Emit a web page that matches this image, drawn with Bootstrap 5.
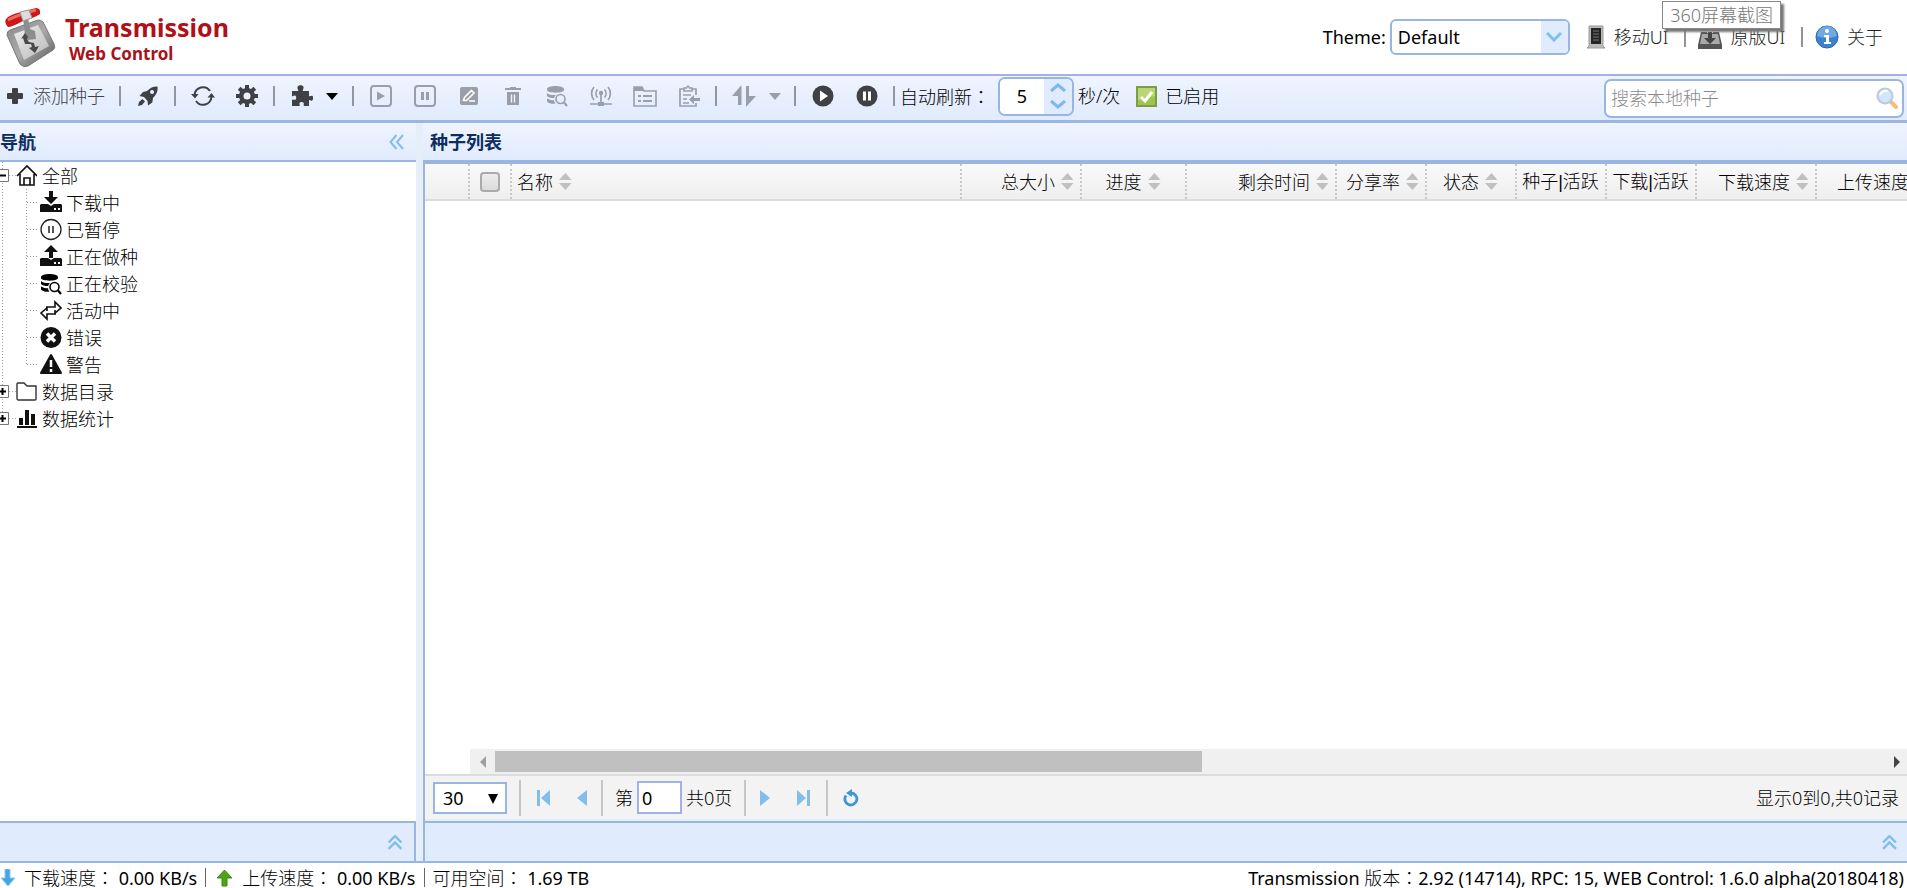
<!DOCTYPE html>
<html lang="zh-CN">
<head>
<meta charset="utf-8">
<meta name="viewport" content="width=device-width, initial-scale=1">
<title>Transmission Web Control</title>
<link href="https://cdn.jsdelivr.net/npm/bootstrap@5.3.0/dist/css/bootstrap.min.css" rel="stylesheet">
<style>
:root{--line:#99b6e2;--pane:#e0ebfd;--gutter:#e6eef8;--sky:#83bdea}
body{font-family:"Noto Sans","Noto Sans CJK SC",sans-serif;font-size:18px;font-weight:300;line-height:24px;color:#000;background:#fff}
svg{display:block;flex:none}
button{border:0;background:none;padding:0;color:inherit;font-weight:inherit}
a{color:#222;text-decoration:none}
.colon{font-family:"Noto Sans CJK TC",sans-serif}
.pipe{font-family:"Liberation Sans",sans-serif}
.masthead{height:74px}
.brand-name{font-size:25px;line-height:30px;font-weight:700;color:#b01016}
.brand-sub{font-size:17px;line-height:24px;font-weight:700;color:#a81218;padding-left:4px}
.theme-box{width:180px;height:36px;border:2px solid var(--line);border-radius:6px;overflow:hidden;background:#fff}
.theme-box select{appearance:none;border:0;background:transparent;padding:0 6px;outline:0;min-width:0}
.arrow-cell{width:27px;background:var(--pane)}
.vbar{width:2px;height:20px;background:#8f939b}
.tip{top:1px;right:126px;border:1px solid #888;background:#fff;color:#777;padding:0 7px;line-height:26px;box-shadow:3px 3px 2px #777}
.toolbar{border-top:2px solid #a3b2e6;border-bottom:3px solid var(--line);height:49px;background:linear-gradient(#eff4ff,#e0ebfd)}
.tool-set{padding-bottom:4px}
.tool{width:44px;height:32px;color:#404145;display:flex;align-items:center;justify-content:center}
.tool:disabled{color:#9a9ea8}
.tool.split{width:68px;gap:13px}
.tool.add{width:115px;justify-content:flex-start;padding-left:7px;gap:10px;white-space:nowrap}
.sep{width:2px;height:20px;background:#92969e;margin:0 5px 0 4px;flex:none}
.spin{width:76px;height:39px;border:2px solid var(--line);border-radius:7px;overflow:hidden;background:#fff}
.spin input{appearance:textfield;border:0;text-align:center;width:44px;padding:0;outline:0}
.spin input::-webkit-inner-spin-button{display:none}
.steps{background:var(--pane)}
.tick{appearance:none;width:21px;height:21px;margin:0;border:2px solid #7e9c45;background:#9fc54a url("data:image/svg+xml,%3Csvg xmlns='http://www.w3.org/2000/svg' viewBox='0 0 17 17'%3E%3Cpath d='M0 0h17v8L0 12z' fill='%23b9d675'/%3E%3Cpath d='M3 9l4 4 7-9' fill='none' stroke='%23fff' stroke-width='3'/%3E%3C/svg%3E") center/cover}
.search{width:300px;height:39px;border:2px solid var(--line);border-radius:7px;background:#fff;margin-right:3px}
.search input{border:0;outline:0;background:transparent;padding:0 0 0 5px;min-width:0;font-weight:300}
.search input::placeholder{color:#8b8b8b;opacity:1}
.nav-pane{width:416px}
.pane-head{height:39px;background:linear-gradient(#eff4ff,#e0ebfd);color:#0e2d5f;font-weight:700;border-bottom:2px solid var(--line)}
.list-pane .pane-head{height:41px;border-bottom-width:4px;padding-left:7px}
.gutter{width:7px;background:var(--gutter)}
.tree li{height:27px}
.root-row{gap:5px}
.leaf-row{gap:4px}
.fold{height:42px;background:var(--pane);border-top:2px solid var(--line);border-bottom:2px solid var(--line)}
.nav-pane .fold{border-right:2px solid var(--line);padding-right:10px}
.list-body{border-left:2px solid var(--line)}
.list-body .fold{padding-right:10px}
.grid-head{background:linear-gradient(#f9f9f9,#efefef);border-bottom:2px solid #dcdcdc}
.grid-head table{table-layout:fixed;width:1511px;border-collapse:separate;border-spacing:0}
.grid-head th{height:35px;font-weight:inherit;border-right:2px dotted #c8c8c8;padding:0 6px 0 5px;white-space:nowrap}
.grid-head th>div{display:flex;align-items:center;gap:6px}
.pick{appearance:none;width:20px;height:20px;margin:0;display:block;border:2px solid #aaa;border-radius:4px;background:linear-gradient(#ededed,#dcdcdc)}
.hscroll{height:25px;margin-left:45px;background:#f0f0f0}
.hscroll button{width:25px}
.thumb{background:#c0c0c0;height:21px}
.pager{height:45px;border-top:2px solid #dcdcdc;background:#f3f3f3}
.rule{width:2px;height:36px;background:#c6c6c6}
.pager select{appearance:none;width:74px;height:32px;border:2px solid var(--line);background:#fff;padding:0 8px;border-radius:0}
.page-size svg{right:9px;top:12px;pointer-events:none}
.pager input{width:45px;height:33px;border:2px solid #a3b2e6;padding:0 3px;background:#fff}
.pg{width:38px;display:flex;justify-content:center;color:var(--sky)}
.under-pager{height:2px;background:var(--gutter)}
.status{height:25px;padding:4px 3px 0 0;line-height:21px;white-space:nowrap}
.status .sbar{width:1px;height:19px;background:#666}
.latin{font-weight:400}
</style>
</head>
<body class="vh-100 d-flex flex-column overflow-hidden">
<svg width="0" height="0" class="position-absolute" aria-hidden="true">
<symbol id="sort" viewBox="0 0 13 17"><path d="M6.500 0l6 7H0zM6.500 17l6-7H0z" fill="#c0c0c0"/></symbol>
<symbol id="dbfind" viewBox="0 0 22 22" fill="currentColor"><path d="M1 4c0-4 17-4 17 0v1c0 3.500-17 3.500-17 0zM1 8c2 2 6 2.300 9 2-1 .8-1.500 2-1.800 3C5 13 2 12.400 1 11zM1 13.500c2 1.300 5 1.800 7 1.800.2 1.400.7 2.600 1.400 3.500C6 19 2 18.500 1 16.500z"/><g fill="none" stroke="currentColor" stroke-width="1.600"><circle cx="14.500" cy="14" r="4.500"/><path d="M18 17.500l3 3.500" stroke-width="2.200"/></g></symbol>
<symbol id="chev" viewBox="0 0 14 14"><path d="M1 7l6-6 6 6M1 13l6-6 6 6" fill="none" stroke="#83bdea" stroke-width="2.200"/></symbol>
<symbol id="disk" viewBox="0 0 22 9"><path d="M1 1h7l3 2 3-2h7l1 1v7H0V2z" fill="#111"/><path d="M14 5h2v2h-2zM18 5h2v2h-2z" fill="#fff"/></symbol>
</svg>

<header class="masthead d-flex justify-content-between position-relative flex-shrink-0">
  <div class="d-flex align-items-start">
    <svg width="61" height="72" viewBox="0 0 61 72" aria-hidden="true">
      <defs><linearGradient id="metal" x2="1" y2="1"><stop stop-color="#888"/><stop offset=".5" stop-color="#aaa"/><stop offset="1" stop-color="#555"/></linearGradient>
      <linearGradient id="plate" x2="1" y2="1"><stop stop-color="#eee"/><stop offset="1" stop-color="#b8b8b8"/></linearGradient></defs>
      <path d="M10 30l28-10q3 0 5 2l11 22q2 4-1 6L28 66q-5 2-8-2L7 35q0-4 3-5z" fill="url(#metal)" stroke="#777"/>
      <path d="M14 34l24-9 11 21-25 14z" fill="url(#plate)"/>
      <path d="M23 18l5-1 2 12 5 2 1 8-8 1-3-5z" fill="#8d8d8d"/>
      <path d="M21 39l4-6 3 4-1 2 2 3 5 1 1 4 4-1-4 7-6-5 3-1-1-3-6 0-2-6z" fill="#4a4a4a"/>
      <path d="M6 19Q9 15 21 12L36 8q5 0 4 6-6 4-17 7Q12 27 8 27q-4-4-2-8z" fill="#cf1719"/>
      <path d="M8 20Q20 14 36 10" stroke="#f06a60" stroke-width="3" fill="none"/>
      <path d="M20 12l9-2 3 8-9 3z" fill="#ddd" stroke="#999"/>
    </svg>
    <div class="pt-2 mt-1 ps-1"><div class="brand-name">Transmission</div><div class="brand-sub">Web Control</div></div>
  </div>
  <div class="d-flex align-items-center gap-2 pe-4">
    <div class="d-flex align-items-center gap-1"><label for="theme" class="latin">Theme:</label>
    <div class="theme-box d-flex"><select id="theme" class="flex-fill latin"><option>Default</option></select>
      <span class="arrow-cell d-flex align-items-center justify-content-center"><svg width="16" height="10" viewBox="0 0 16 10"><path d="M1 1l7 7 7-7" fill="none" stroke="#7cc0f0" stroke-width="3"/></svg></span></div></div>
    <a href="#" class="d-flex align-items-center gap-2 ms-2"><svg width="20" height="24" viewBox="0 0 20 24"><path d="M3 1h14v20l2 2H1l2-2z" fill="#bbb" stroke="#999"/><path d="M5 3h10v16H5z" fill="#252525"/><path d="M7 6h6M7 9h6M7 12h6M7 15h6" stroke="#777"/></svg>移动UI</a>
    <span class="vbar ms-2 me-1"></span>
    <a href="#" class="d-flex align-items-center gap-2"><svg width="24" height="24" viewBox="0 0 24 24"><path d="M3 7h18l3 13v4H0v-4z" fill="#555"/><path d="M4 9h16l2 10H2z" fill="#aaa"/><path d="M2 2h20v4H2z" fill="#d33"/><path d="M9 1h6v7H9z" fill="#eee"/><path d="M10 7h4v6h4l-6 6-6-6h4z" fill="#444"/></svg>原版UI</a>
    <span class="vbar ms-2 me-1"></span>
    <a href="#" class="d-flex align-items-center gap-2"><svg width="24" height="24" viewBox="0 0 24 24"><circle cx="12" cy="12" r="11" fill="#3c82cb" stroke="#2a67ad"/><path d="M2 11a10 10 0 0 1 20 0q-10 4-20 0z" fill="#71aae3"/><circle cx="12" cy="6" r="2" fill="#fff"/><path d="M9 10h5v7h2v2H9v-2h2v-5H9z" fill="#fff"/></svg>关于</a>
  </div>
  <div class="tip position-absolute" role="tooltip">360屏幕截图</div>
</header>

<div class="toolbar d-flex align-items-center justify-content-between flex-shrink-0" role="toolbar">
  <div class="tool-set d-flex align-items-center">
    <button class="tool add"><svg width="16" height="16" viewBox="0 0 16 16"><path d="M5 1q0-1 1-1h4q1 0 1 1v4h4q1 0 1 1v4q0 1-1 1h-4v4q0 1-1 1H6q-1 0-1-1v-4H1q-1 0-1-1V6q0-1 1-1h4z" fill="currentColor"/></svg>添加种子</button>
    <span class="sep"></span>
    <button class="tool" aria-label="启动"><svg width="20" height="20" viewBox="0 0 20 20"><path fill-rule="evenodd" d="M19.500.5c.5 4-.5 7.500-4.500 11.500l-.7 4.500L10 19.500 9.500 15 6 11 1.500 10 5 6l4-1C12.500 1.500 15.500.3 19.500.5zM14 4a2 2 0 1 0 .1 4A2 2 0 0 0 14 4z" fill="currentColor"/><path d="M4.500 13L7 15.500 4 19 0 20l1-4z" fill="currentColor"/></svg></button>
    <span class="sep"></span>
    <button class="tool" aria-label="刷新"><svg width="24" height="20" viewBox="0 0 24 20"><g fill="none" stroke="currentColor" stroke-width="2"><path d="M3.500 9a8.500 8.500 0 0 1 15.500-4M20.500 11A8.500 8.500 0 0 1 5 15"/></g><path d="M0 8h7.500L4 12.500zM16.500 11.500H24L20.500 7z" fill="currentColor"/></svg></button>
    <button class="tool" aria-label="设置"><svg width="22" height="22" viewBox="0 0 22 22"><g fill="currentColor"><path d="M9 0h4v22H9z"/><path d="M9 0h4v22H9z" transform="rotate(45 11 11)"/><path d="M9 0h4v22H9z" transform="rotate(90 11 11)"/><path d="M9 0h4v22H9z" transform="rotate(135 11 11)"/><circle cx="11" cy="11" r="8"/></g><circle cx="11" cy="11" r="3.500" fill="#eaf1fe"/></svg></button>
    <span class="sep"></span>
    <button class="tool split" aria-label="插件"><svg width="22" height="22" viewBox="0 0 22 22"><path d="M1 6h6c1-1-1-2-.5-4C7-.5 12-.5 12.500 2c.5 2-1.500 3-.5 4h6v5c1 1 2-.8 3.300-.2 1.500 1 .9 4.700-1 4.900-1.300 0-1.800-1.200-2.300-.2V21h-5c-1-1 .5-2-.5-3.200-1-1-3.500-1-4 .5-.4 1.200.8 1.700 0 2.700H1v-6c1-1 2 .3 3.300-.3 1.400-1 1.200-3.800-.5-4.200C2.500 10.300 2 11.800 1 11z" fill="currentColor"/></svg><svg width="12" height="7" viewBox="0 0 12 7"><path d="M0 0h12L6 7z" fill="#000"/></svg></button>
    <span class="sep"></span>
    <button class="tool" disabled aria-label="开始"><svg width="22" height="22" viewBox="0 0 22 22"><rect x="1" y="1" width="20" height="20" rx="3" fill="none" stroke="currentColor" stroke-width="2"/><path d="M7 6.500l8 4.500-8 4.500z" fill="currentColor"/></svg></button>
    <button class="tool" disabled aria-label="暂停"><svg width="22" height="22" viewBox="0 0 22 22"><rect x="1" y="1" width="20" height="20" rx="3" fill="none" stroke="currentColor" stroke-width="2"/><path d="M7 7h3v8H7zM12 7h3v8h-3z" fill="currentColor"/></svg></button>
    <button class="tool" disabled aria-label="编辑"><svg width="18" height="18" viewBox="0 0 18 18"><rect width="18" height="18" rx="2" fill="currentColor"/><path d="M3.500 13.500l1-3 7-7 2.500 2.500-7.500 7.500zM9 14h6" fill="none" stroke="#fff" stroke-width="1.600"/></svg></button>
    <button class="tool" disabled aria-label="删除"><svg width="16" height="18" viewBox="0 0 16 18"><path d="M5 0h6v1h5v2H0V1h5z" fill="currentColor"/><path d="M2 5h12v13H2z" fill="currentColor"/><path d="M6.500 7.500v8M9.500 7.500v8" stroke="#eef3fe" stroke-width="1.400"/></svg></button>
    <button class="tool" disabled aria-label="校验"><svg width="22" height="22"><use href="#dbfind"/></svg></button>
    <button class="tool" disabled aria-label="汇报"><svg width="22" height="20" viewBox="0 0 22 20"><g fill="none" stroke="currentColor" stroke-width="1.700"><path d="M4 1a10 10 0 0 0 0 13M18 1a10 10 0 0 1 0 13M7.500 3.500a6 6 0 0 0 0 8M14.500 3.500a6 6 0 0 1 0 8M11 8v8M0 18h22"/></g><circle cx="11" cy="7" r="2.200" fill="currentColor"/><path d="M8 16h6v4H8z" fill="currentColor"/></svg></button>
    <button class="tool" disabled aria-label="目录"><svg width="24" height="21" viewBox="0 0 24 21"><path d="M1 20V1h8l2 4h12v15z" fill="none" stroke="currentColor" stroke-width="1.600"/><path d="M1 1h8l2 4H1z" fill="currentColor"/><path d="M5 10h3M5 15h3M10 10h9M10 15h9" stroke="currentColor" stroke-width="2"/></svg></button>
    <button class="tool" disabled aria-label="标签"><svg width="21" height="22" viewBox="0 0 21 22"><path d="M17 10V4h-4M5 4H1v17h16v-3M5 6V3h2.500q1.500-4 3 0H13v3z" fill="none" stroke="currentColor" stroke-width="1.700"/><path d="M4 10h8M4 14h4M4 18h6" stroke="currentColor" stroke-width="1.600"/><path d="M21 13v3h-6v3l-5-4.500L15 10v3z" fill="currentColor"/></svg></button>
    <span class="sep"></span>
    <button class="tool split" disabled aria-label="队列"><svg width="24" height="22" viewBox="0 0 24 22"><path d="M9.500 0v20H6V11H0zM14 1h3v10h7l-10 11z" fill="currentColor"/></svg><svg width="12" height="7" viewBox="0 0 12 7"><path d="M0 0h12L6 7z" fill="currentColor"/></svg></button>
    <span class="sep"></span>
    <button class="tool" aria-label="全部开始"><svg width="22" height="22" viewBox="0 0 22 22"><circle cx="11" cy="11" r="10.500" fill="currentColor"/><path d="M8 5.500l8 5.500-8 5.500z" fill="#fff"/></svg></button>
    <button class="tool" aria-label="全部暂停"><svg width="22" height="22" viewBox="0 0 22 22"><circle cx="11" cy="11" r="10.500" fill="currentColor"/><path d="M7 6.500h3v9H7zM12 6.500h3v9h-3z" fill="#fff"/></svg></button>
    <span class="sep"></span>
    <label for="interval" class="pe-2">自动刷新<span class="colon" lang="zh-TW">：</span></label>
    <div class="spin d-flex"><input id="interval" type="number" value="5" class="latin">
      <span class="steps flex-fill d-flex flex-column justify-content-around align-items-center"><button aria-label="增加"><svg width="16" height="9" viewBox="0 0 16 9"><path d="M1 8l7-6 7 6" fill="none" stroke="#7cb9ea" stroke-width="3"/></svg></button><button aria-label="减少"><svg width="16" height="9" viewBox="0 0 16 9"><path d="M1 1l7 6 7-6" fill="none" stroke="#7cb9ea" stroke-width="3"/></svg></button></span></div>
    <span class="ps-1">秒/次</span>
    <label class="d-flex align-items-center gap-2 ps-3"><input type="checkbox" class="tick" checked> 已启用</label>
  </div>
  <div class="search d-flex align-items-center"><input type="text" class="flex-fill" placeholder="搜索本地种子" aria-label="搜索本地种子">
    <button aria-label="搜索" class="pe-1"><svg width="22" height="22" viewBox="0 0 22 22"><path d="M14 14l6 6" stroke="#f0bf80" stroke-width="4" stroke-linecap="round"/><circle cx="9" cy="9" r="7.500" fill="#cfe6fb" stroke="#bcc9da" stroke-width="2"/><path d="M4 8q2-5 8-4" stroke="#fff" stroke-width="2" fill="none"/></svg></button></div>
</div>

<main class="flex-fill d-flex overflow-hidden">
  <aside class="nav-pane d-flex flex-column flex-shrink-0">
    <div class="pane-head d-flex align-items-center justify-content-between"><span>导航</span><button aria-label="折叠" class="me-2 pe-1"><svg width="15" height="16" viewBox="0 0 15 16"><path d="M7.500 1L1.500 8l6 7M14 1L8 8l6 7" fill="none" stroke="#83bdea" stroke-width="2"/></svg></button></div>
    <ul class="tree list-unstyled flex-fill mb-0">
      <li class="root-row d-flex align-items-center">
        <svg width="37" height="27" viewBox="0 0 37 27"><path d="M2.500 0v27M9 13.500h7" stroke="#aaa" stroke-dasharray="1 2"/><path d="M-4.500 7.500h13v12h-13z" fill="#fff" stroke="#777"/><path d="M0 13.500h6" stroke="#000" stroke-width="2"/><path d="M17 14L27 4l10 10M20 12v11h14V12M24 23v-7h6v7" fill="none" stroke="#111" stroke-width="1.600"/></svg>全部</li>
      <li class="leaf-row d-flex align-items-center"><svg width="62" height="27" viewBox="0 0 62 27"><path d="M2.500 0v27M26.500 0v27M27 13.500h12" stroke="#999" stroke-dasharray="1 2"/><path d="M49 2h4v6h5l-7 7-7-7h5z" fill="#111"/><use href="#disk" x="40" y="14" width="22" height="9"/></svg>下载中</li>
      <li class="leaf-row d-flex align-items-center"><svg width="62" height="27" viewBox="0 0 62 27"><path d="M2.500 0v27M26.500 0v27M27 13.500h12" stroke="#999" stroke-dasharray="1 2"/><circle cx="51" cy="13.500" r="10" fill="none" stroke="#222" stroke-width="1.300"/><path d="M49 10v7M53 10v7" stroke="#222" stroke-width="1.500"/></svg>已暂停</li>
      <li class="leaf-row d-flex align-items-center"><svg width="62" height="27" viewBox="0 0 62 27"><path d="M2.500 0v27M26.500 0v27M27 13.500h12" stroke="#999" stroke-dasharray="1 2"/><path d="M49 15h4V9h5l-7-7-7 7h5z" fill="#111"/><use href="#disk" x="40" y="14" width="22" height="9"/></svg>正在做种</li>
      <li class="leaf-row d-flex align-items-center"><svg width="62" height="27" viewBox="0 0 62 27"><path d="M2.500 0v27M26.500 0v27M27 13.500h12" stroke="#999" stroke-dasharray="1 2"/><use href="#dbfind" x="40" y="3" width="22" height="22"/></svg>正在校验</li>
      <li class="leaf-row d-flex align-items-center"><svg width="62" height="27" viewBox="0 0 62 27"><path d="M2.500 0v27M26.500 0v27M27 13.500h12" stroke="#999" stroke-dasharray="1 2"/><path d="M46 10h9V5l6 6-6 5v-3M56 17h-9v5l-6-6 6-5v3" fill="none" stroke="#111" stroke-width="1.600"/></svg>活动中</li>
      <li class="leaf-row d-flex align-items-center"><svg width="62" height="27" viewBox="0 0 62 27"><path d="M2.500 0v27M26.500 0v27M27 13.500h12" stroke="#999" stroke-dasharray="1 2"/><circle cx="51" cy="13.500" r="10.500" fill="#111"/><path d="M47 9.500l8 8M55 9.500l-8 8" stroke="#fff" stroke-width="3.500"/></svg>错误</li>
      <li class="leaf-row d-flex align-items-center"><svg width="62" height="27" viewBox="0 0 62 27"><path d="M2.500 0v27M26.500 0v13M27 13.500h12" stroke="#999" stroke-dasharray="1 2"/><path d="M51 4l10 18H41z" fill="#111" stroke="#111" stroke-width="2" stroke-linejoin="round"/><path d="M51 9v7M51 18v3" stroke="#fff" stroke-width="2.500"/></svg>警告</li>
      <li class="root-row d-flex align-items-center">
        <svg width="37" height="27" viewBox="0 0 37 27"><path d="M2.500 0v27M9 13.500h7" stroke="#aaa" stroke-dasharray="1 2"/><path d="M-4.500 7.500h13v12h-13z" fill="#fff" stroke="#777"/><path d="M0 13.500h6M2.500 10v7" stroke="#000" stroke-width="2"/><path d="M17 20V6q0-1 1-1h6l3 3h9v13q0 1-1 1H18q-1 0-1-2" fill="none" stroke="#333" stroke-width="1.400"/></svg>数据目录</li>
      <li class="root-row d-flex align-items-center">
        <svg width="37" height="27" viewBox="0 0 37 27"><path d="M2.500 0v13M9 13.500h7" stroke="#aaa" stroke-dasharray="1 2"/><path d="M-4.500 7.500h13v12h-13z" fill="#fff" stroke="#777"/><path d="M0 13.500h6M2.500 10v7" stroke="#000" stroke-width="2"/><path d="M17 21h20v2H17zM19 13h4v7h-4zM25 5h4v15h-4zM31 9h4v11h-4z" fill="#111"/></svg>数据统计</li>
    </ul>
    <div class="fold d-flex align-items-center justify-content-end"><button aria-label="展开"><svg width="18" height="15"><use href="#chev"/></svg></button></div>
  </aside>
  <div class="d-flex flex-column"><div class="gutter flex-fill"></div><div class="border-bottom border-2" style="--bs-border-color:#99b6e2"></div></div>
  <section class="list-pane flex-fill d-flex flex-column overflow-hidden">
    <div class="pane-head d-flex align-items-center flex-shrink-0">种子列表</div>
    <div class="list-body flex-fill d-flex flex-column overflow-hidden">
      <div class="grid-head overflow-hidden flex-shrink-0">
        <table>
          <colgroup><col style="width:45px"><col style="width:42px"><col style="width:450px"><col style="width:120px"><col style="width:105px"><col style="width:150px"><col style="width:90px"><col style="width:90px"><col style="width:90px"><col style="width:90px"><col style="width:120px"><col style="width:119px"></colgroup>
          <thead><tr>
            <th></th>
            <th><div class="justify-content-center"><input type="checkbox" class="pick" aria-label="全选"></div></th>
            <th><div>名称<svg width="13" height="17"><use href="#sort"/></svg></div></th>
            <th><div class="justify-content-end">总大小<svg width="13" height="17"><use href="#sort"/></svg></div></th>
            <th><div class="justify-content-center">进度<svg width="13" height="17"><use href="#sort"/></svg></div></th>
            <th><div class="justify-content-end">剩余时间<svg width="13" height="17"><use href="#sort"/></svg></div></th>
            <th><div class="justify-content-end">分享率<svg width="13" height="17"><use href="#sort"/></svg></div></th>
            <th><div class="justify-content-center">状态<svg width="13" height="17"><use href="#sort"/></svg></div></th>
            <th class="text-center">种子<span class="pipe">|</span>活跃</th>
            <th class="text-center">下载<span class="pipe">|</span>活跃</th>
            <th><div class="justify-content-end">下载速度<svg width="13" height="17"><use href="#sort"/></svg></div></th>
            <th><div class="justify-content-end">上传速度<svg width="13" height="17"><use href="#sort"/></svg></div></th>
          </tr></thead>
        </table>
      </div>
      <div class="flex-fill"></div>
      <div class="hscroll d-flex align-items-center flex-shrink-0">
        <button aria-label="向左" class="d-flex justify-content-center"><svg width="6" height="12" viewBox="0 0 6 12"><path d="M6 0v12L0 6z" fill="#a0a0a0"/></svg></button>
        <div class="flex-fill"><div class="thumb" style="width:51%"></div></div>
        <button aria-label="向右" class="d-flex justify-content-center ps-1"><svg width="6" height="12" viewBox="0 0 6 12"><path d="M0 0v12l6-6z" fill="#444"/></svg></button>
      </div>
      <div class="pager d-flex align-items-center justify-content-between flex-shrink-0">
        <div class="d-flex align-items-center">
          <span class="page-size position-relative ms-2 me-2"><select class="d-block latin" aria-label="每页"><option>30</option></select><svg class="position-absolute" width="10" height="10" viewBox="0 0 10 10"><path d="M0 0h10L5 10z"/></svg></span>
          <span class="rule ms-1"></span>
          <span class="d-flex ps-1"><button class="pg" aria-label="首页"><svg width="14" height="16" viewBox="0 0 14 16"><path d="M0 0h3v16H0zM13 0v16L4 8z" fill="currentColor"/></svg></button>
          <button class="pg" aria-label="上一页"><svg width="10" height="16" viewBox="0 0 10 16"><path d="M10 0v16L0 8z" fill="currentColor"/></svg></button></span>
          <span class="rule"></span>
          <label for="page" class="ps-2 ms-1 pe-1">第</label><input id="page" type="text" value="0" class="latin"><span class="ps-1 pe-2">共0页</span>
          <span class="rule ms-1"></span>
          <span class="d-flex"><button class="pg" aria-label="下一页"><svg width="10" height="16" viewBox="0 0 10 16"><path d="M0 0v16l10-8z" fill="currentColor"/></svg></button>
          <button class="pg" aria-label="末页"><svg width="14" height="16" viewBox="0 0 14 16"><path d="M11 0h3v16h-3zM1 0v16l9-8z" fill="currentColor"/></svg></button></span>
          <span class="rule ms-1"></span>
          <button class="pg ms-1" aria-label="重新载入"><svg width="18" height="18" viewBox="0 0 18 18"><path d="M9 4a6 6 0 1 1-5 2.500" fill="none" stroke="#3b97d8" stroke-width="2.800"/><path d="M4 4l6-4v8z" fill="#3b97d8"/></svg></button>
        </div>
        <span class="pe-2">显示0到0,共0记录</span>
      </div>
      <div class="under-pager flex-shrink-0"></div>
      <div class="fold d-flex align-items-center justify-content-end flex-shrink-0"><button aria-label="展开"><svg width="15" height="15"><use href="#chev"/></svg></button></div>
    </div>
  </section>
</main>

<footer class="status d-flex justify-content-between flex-shrink-0">
  <div class="d-flex align-items-center gap-2">
    <svg width="16" height="18" viewBox="0 0 16 18"><path d="M5 0h5v9h5l-7 8-7-8h4z" fill="#43a4e2" stroke="#8fc8ec"/></svg>
    <span>下载速度<span class="colon" lang="zh-TW">：</span> <span class="latin">0.00 KB/s</span></span><span class="sbar"></span>
    <svg width="20" height="18" viewBox="0 0 20 18"><path d="M8 17h5V9h5l-7.500-8L3 9h5z" fill="#4fa416" stroke="#3e8b10"/></svg>
    <span>上传速度<span class="colon" lang="zh-TW">：</span> <span class="latin">0.00 KB/s</span></span><span class="sbar"></span>
    <span>可用空间<span class="colon" lang="zh-TW">：</span> <span class="latin">1.69 TB</span></span>
  </div>
  <div><span class="latin">Transmission</span> 版本<span class="colon" lang="zh-TW">：</span><span class="latin">2.92 (14714), RPC: 15, WEB Control: 1.6.0 alpha(20180418)</span></div>
</footer>
<script src="https://cdn.jsdelivr.net/npm/bootstrap@5.3.0/dist/js/bootstrap.bundle.min.js"></script>
</body>
</html>
